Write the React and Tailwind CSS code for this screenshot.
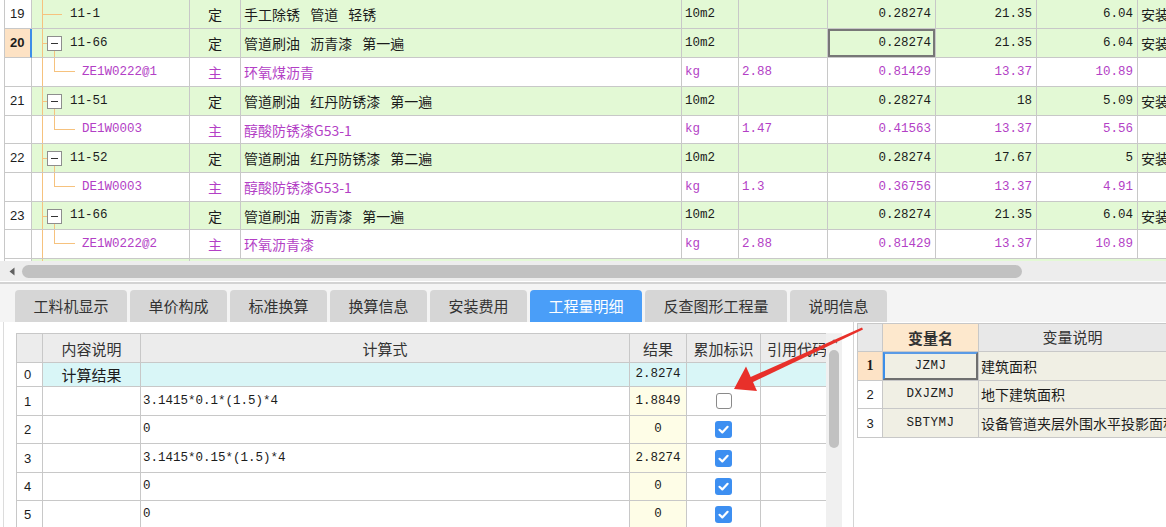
import React from "react";

const BD = "border-[#c8c8c8]";
const MONO = "[font-family:'Liberation_Mono','Noto_Sans_CJK_SC',monospace] text-[12.5px]";
const SANS = "[font-family:'Liberation_Sans',sans-serif]";

const topRows = [
  { num: "19", kind: "leaf", code: "11-1", type: "定", name: "手工除锈 管道 轻锈", unit: "10m2", cont: "", qty: "0.28274", price: "21.35", total: "6.04", extra: "安装", h: "h-[29px]" },
  { num: "20", kind: "parent", code: "11-66", type: "定", name: "管道刷油 沥青漆 第一遍", unit: "10m2", cont: "", qty: "0.28274", price: "21.35", total: "6.04", extra: "安装", h: "h-[29px]", sel: true },
  { num: "", kind: "child", code: "ZE1W0222@1", type: "主", name: "环氧煤沥青", unit: "kg", cont: "2.88", qty: "0.81429", price: "13.37", total: "10.89", extra: "", h: "h-[29px]" },
  { num: "21", kind: "parent", code: "11-51", type: "定", name: "管道刷油 红丹防锈漆 第一遍", unit: "10m2", cont: "", qty: "0.28274", price: "18", total: "5.09", extra: "安装", h: "h-[29px]" },
  { num: "", kind: "child", code: "DE1W0003", type: "主", name: "醇酸防锈漆G53-1", unit: "kg", cont: "1.47", qty: "0.41563", price: "13.37", total: "5.56", extra: "", h: "h-[28px]" },
  { num: "22", kind: "parent", code: "11-52", type: "定", name: "管道刷油 红丹防锈漆 第二遍", unit: "10m2", cont: "", qty: "0.28274", price: "17.67", total: "5", extra: "安装", h: "h-[29px]" },
  { num: "", kind: "child", code: "DE1W0003", type: "主", name: "醇酸防锈漆G53-1", unit: "kg", cont: "1.3", qty: "0.36756", price: "13.37", total: "4.91", extra: "", h: "h-[29px]" },
  { num: "23", kind: "parent", code: "11-66", type: "定", name: "管道刷油 沥青漆 第一遍", unit: "10m2", cont: "", qty: "0.28274", price: "21.35", total: "6.04", extra: "安装", h: "h-[28px]" },
  { num: "", kind: "child", code: "ZE1W0222@2", type: "主", name: "环氧沥青漆", unit: "kg", cont: "2.88", qty: "0.81429", price: "13.37", total: "10.89", extra: "", h: "h-[29px]" },
];

function TreeCell({ r }) {
  const line = "absolute bg-[#f6c27e]";
  return (
    <div className={`relative w-[158px] shrink-0 border-r border-b ${BD} flex items-center`}>
      <div className={`${line} left-[10px] top-0 bottom-0 w-px`} />
      {r.kind === "leaf" && <div className={`${line} left-[10px] top-[14px] w-[20px] h-px`} />}
      {r.kind === "parent" && (
        <>
          <div className={`${line} left-[10px] top-[14px] w-[5px] h-px`} />
          <div className="absolute left-[15px] top-[7px] w-[15px] h-[15px] border border-[#8e8e8e] bg-white flex items-center justify-center">
            <div className="w-[7px] h-px bg-[#333]" />
          </div>
          <div className={`${line} left-[22px] top-[22px] bottom-0 w-px`} />
        </>
      )}
      {r.kind === "child" && (
        <>
          <div className={`${line} left-[22px] top-0 h-[14px] w-px`} />
          <div className={`${line} left-[22px] top-[13px] w-[21px] h-px`} />
        </>
      )}
      <span className={`${MONO} ${r.kind === "child" ? "pl-[50px] text-[#b33fc6]" : "pl-[38px] text-[#1c1c1c]"} leading-none`}>
        {r.code}
      </span>
    </div>
  );
}

function TopRow({ r }) {
  const child = r.kind === "child";
  const bg = child ? "bg-white" : "bg-[#e3f9d5]";
  const tc = child ? "text-[#b33fc6]" : "text-[#1c1c1c]";
  const cell = `shrink-0 border-r border-b ${BD} flex items-center leading-none`;
  return (
    <div className={`flex ${r.h} ${bg}`}>
      <div
        className={`w-[27px] shrink-0 border-b ${BD} flex items-center pl-[5px] text-[13px] ${SANS} ${
          r.sel ? "bg-[#fde2c4] font-bold border-r-2 border-r-[#3c8ee8]" : "bg-white border-r"
        }`}
      >
        {r.num}
      </div>
      <TreeCell r={r} />
      <div className={`${cell} w-[51px] justify-center text-[14px] ${tc}`}>{r.type}</div>
      <div className={`${cell} w-[441px] pl-[3px] text-[14px] [word-spacing:7px] ${tc}`}>{r.name}</div>
      <div className={`${cell} w-[57px] pl-[3px] ${MONO} ${tc}`}>{r.unit}</div>
      <div className={`${cell} w-[89px] pl-[3px] ${MONO} ${tc}`}>{r.cont}</div>
      <div className={`${cell} relative w-[108px] justify-end pr-[4px] ${MONO} ${tc}`}>
        {r.sel && <div className="absolute inset-0 border-2 border-[#777]" />}
        {r.qty}
      </div>
      <div className={`${cell} w-[101px] justify-end pr-[4px] ${MONO} ${tc}`}>{r.price}</div>
      <div className={`${cell} w-[101px] justify-end pr-[4px] ${MONO} ${tc}`}>{r.total}</div>
      <div className={`flex-1 border-b ${BD} flex items-center pl-[3px] text-[14px] whitespace-nowrap overflow-hidden leading-none`}>
        {r.extra}
      </div>
    </div>
  );
}

const tabs = [
  { t: "工料机显示", w: "w-[112px]" },
  { t: "单价构成", w: "w-[97px]" },
  { t: "标准换算", w: "w-[97px]" },
  { t: "换算信息", w: "w-[97px]" },
  { t: "安装费用", w: "w-[97px]" },
  { t: "工程量明细", w: "w-[112px]", active: true },
  { t: "反查图形工程量", w: "w-[142px]" },
  { t: "说明信息", w: "w-[97px]" },
];

const lowRows = [
  { n: "1", f: "3.1415*0.1*(1.5)*4", r: "1.8849", c: false, h: "h-[29px]" },
  { n: "2", f: "0", r: "0", c: true, h: "h-[28px]" },
  { n: "3", f: "3.1415*0.15*(1.5)*4", r: "2.8274", c: true, h: "h-[29px]" },
  { n: "4", f: "0", r: "0", c: true, h: "h-[28px]" },
  { n: "5", f: "0", r: "0", c: true, h: "h-[28px]" },
];

function Checkbox({ checked }) {
  if (!checked)
    return <div className="w-[16px] h-[16px] rounded-[3px] border border-[#8a8a8a] bg-white" />;
  return (
    <div className="w-[17px] h-[17px] rounded-[3px] bg-[#3d8ff1] flex items-center justify-center">
      <svg width="13" height="13" viewBox="0 0 13 13">
        <path d="M2.5 6.8 L5.3 9.4 L10.6 3.8" fill="none" stroke="white" strokeWidth="2.2" strokeLinecap="round" strokeLinejoin="round" />
      </svg>
    </div>
  );
}

function LowerGrid() {
  const c = `shrink-0 border-r border-b ${BD} flex items-center leading-none`;
  return (
    <div className="flex">
      <div className={`w-[810px] overflow-hidden border-l border-t ${BD}`}>
        <div className="flex h-[29px] bg-[#ececec] text-[15px] text-[#333] w-[900px]">
          <div className={`${c} w-[26px]`} />
          <div className={`${c} w-[98px] justify-center`}>内容说明</div>
          <div className={`${c} w-[489px] justify-center`}>计算式</div>
          <div className={`${c} w-[57px] justify-center`}>结果</div>
          <div className={`${c} w-[74px] justify-center`}>累加标识</div>
          <div className={`${c} w-[80px] pl-[6px] whitespace-nowrap`}>引用代码</div>
        </div>
        <div className="flex h-[24px] w-[900px]">
          <div className={`${c} w-[26px] bg-white pl-[7px] text-[13px] ${SANS}`}>0</div>
          <div className={`${c} w-[98px] bg-[#d9f6f7] justify-center text-[15px]`}>计算结果</div>
          <div className={`${c} w-[489px] bg-[#d9f6f7]`} />
          <div className={`${c} w-[57px] bg-[#d9f6f7] justify-center ${MONO}`}>2.8274</div>
          <div className={`${c} w-[74px] bg-[#d9f6f7]`} />
          <div className={`${c} w-[80px] bg-[#d9f6f7]`} />
        </div>
        {lowRows.map((r) => (
          <div key={r.n} className={`flex ${r.h} w-[900px] bg-white`}>
            <div className={`${c} w-[26px] pl-[7px] text-[13px] ${SANS}`}>{r.n}</div>
            <div className={`${c} w-[98px]`} />
            <div className={`${c} w-[489px] pl-[2px] ${MONO}`}>{r.f}</div>
            <div className={`${c} w-[57px] bg-[#fefde7] justify-center ${MONO}`}>{r.r}</div>
            <div className={`${c} w-[74px] justify-center`}>
              <Checkbox checked={r.c} />
            </div>
            <div className={`${c} w-[80px]`} />
          </div>
        ))}
      </div>
      <div className="w-[16px] bg-[#f0f0f0] flex flex-col items-center">
        <svg width="8" height="6" viewBox="0 0 8 6" className="mt-[5px]">
          <path d="M1 5 L4 2 L7 5" fill="none" stroke="#777" strokeWidth="1.2" />
        </svg>
        <div className="mt-[6px] w-[10px] h-[98px] rounded-full bg-[#c1c1c1]" />
      </div>
    </div>
  );
}

const vars = [
  { n: "1", k: "JZMJ", d: "建筑面积", h: "h-[29px]", sel: true },
  { n: "2", k: "DXJZMJ", d: "地下建筑面积", h: "h-[28px]" },
  { n: "3", k: "SBTYMJ", d: "设备管道夹层外围水平投影面积", h: "h-[29px]" },
];

function RightGrid() {
  const c = `shrink-0 border-r border-b ${BD} flex items-center leading-none`;
  return (
    <div className={`border-l border-t ${BD}`}>
      <div className="flex h-[28px] text-[15px] text-[#333]">
        <div className={`${c} w-[25px] bg-[#e8e8e8]`} />
        <div className={`${c} w-[96px] bg-[#fde8cd] justify-center font-bold`}>变量名</div>
        <div className={`flex-1 border-b ${BD} bg-[#e8e8e8] flex items-center justify-center`}>变量说明</div>
      </div>
      {vars.map((v) => (
        <div key={v.n} className={`flex ${v.h}`}>
          <div
            className={`${c} w-[25px] justify-center text-[13px] ${
              v.sel ? "bg-[#fde3c6] font-bold [font-family:'Liberation_Serif',serif] text-[14px]" : `bg-white ${SANS}`
            }`}
          >
            {v.n}
          </div>
          <div className={`${c} relative w-[96px] bg-[#f0efe4] justify-center ${MONO} text-[12.5px] tracking-[0.5px]`}>
            {v.sel && (
              <div className="absolute inset-0 border-2 border-[#6f6f6f] border-t-[#5a9be6] border-l-[#3c8ee8]" />
            )}
            {v.k}
          </div>
          <div className={`flex-1 min-w-0 border-b ${BD} bg-[#f0efe4] flex items-center pl-[2px] text-[14px] whitespace-nowrap overflow-hidden`}>
            {v.d}
          </div>
        </div>
      ))}
    </div>
  );
}

export default function App() {
  return (
    <div className="relative w-[1166px] h-[527px] overflow-hidden bg-white flex flex-col [font-family:'Noto_Sans_CJK_SC',sans-serif] text-[#1c1c1c]">
      {/* top grid */}
      <div className={`ml-[4px] border-l ${BD} flex flex-col h-[261px] shrink-0 overflow-hidden`}>
        {topRows.map((r, i) => (
          <TopRow key={i} r={r} />
        ))}
        <div className="flex h-[2px] shrink-0">
          <div className={`w-[27px] border-r ${BD} bg-white`} />
          <div className="relative w-[158px] border-r border-[#c8c8c8] bg-[#e3f9d5]">
            <div className="absolute left-[10px] top-0 bottom-0 w-px bg-[#f6c27e]" />
          </div>
          <div className="flex-1 bg-[#e3f9d5]" />
        </div>
      </div>

      {/* horizontal scrollbar */}
      <div className="h-[20px] shrink-0 bg-[#ededed] flex items-center">
        <svg width="6" height="9" viewBox="0 0 6 9" className="ml-[9px]">
          <path d="M5.5 0.5 L0.5 4.5 L5.5 8.5 Z" fill="#606060" />
        </svg>
        <div className="ml-[7px] w-[1000px] h-[13px] rounded-full bg-[#c1c1c1]" />
      </div>
      <div className="h-[1px] shrink-0 bg-white" />
      <div className="h-[2px] shrink-0 bg-[#d3d3d3]" />

      {/* tabs */}
      <div className="h-[38px] shrink-0 bg-[#f4f4f4] flex items-end pl-[15px] gap-[3px]">
        {tabs.map((t) => (
          <div
            key={t.t}
            className={`${t.w} h-[32px] rounded-t-[4px] flex items-center justify-center text-[15px] ${
              t.active ? "bg-[#4a9ef8] text-white" : "bg-[#d6d6d6] text-[#333]"
            }`}
          >
            {t.t}
          </div>
        ))}
      </div>

      {/* bottom */}
      <div className="flex-1 flex min-h-0">
        <div className="w-[853px] shrink-0 pl-[3px]">
          <div className="h-full border-l border-[#dcdcdc] pl-[12px] pt-[11px] overflow-hidden">
            <LowerGrid />
          </div>
        </div>
        <div className="flex-1 min-w-0 border-l border-[#d4d4d4] pl-[3px] pt-[1px] overflow-hidden">
          <RightGrid />
        </div>
      </div>

      {/* red annotation arrow */}
      <svg className="absolute left-0 top-0 pointer-events-none" width="1166" height="527">
        <polygon points="862,327.4 863,329.6 752,382.5 749.5,377.5" fill="#e8302a" />
        <polygon points="734,389 746,366.5 757,391" fill="#e8302a" />
      </svg>
    </div>
  );
}
